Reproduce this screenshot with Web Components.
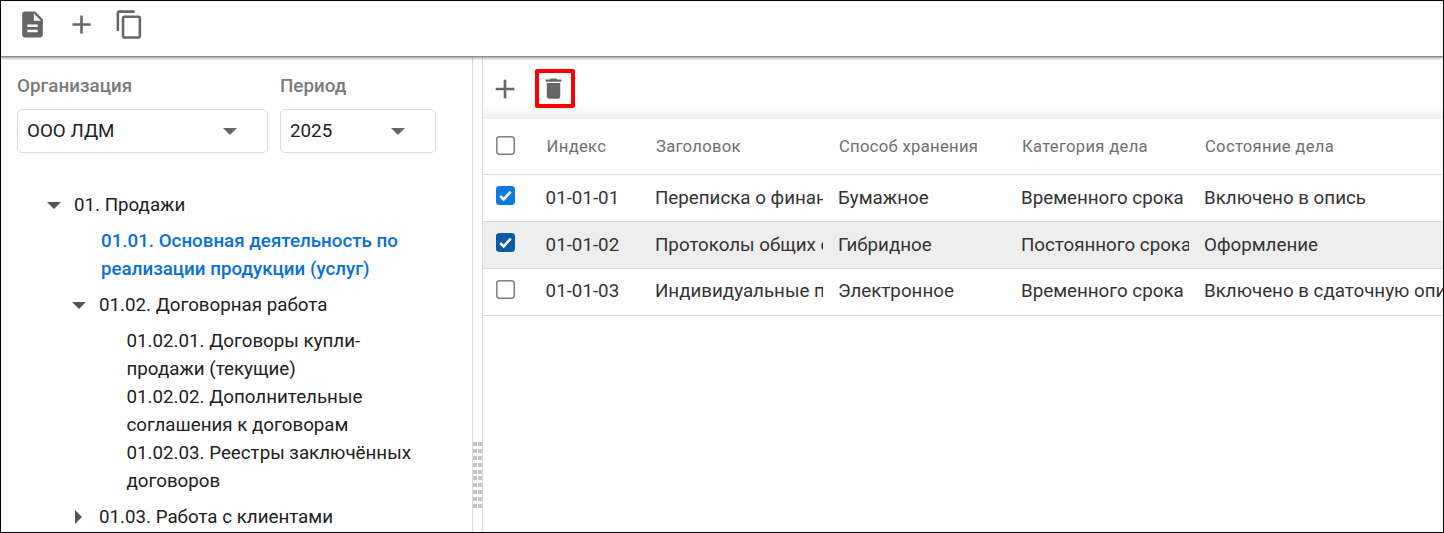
<!DOCTYPE html>
<html lang="ru"><head><meta charset="utf-8"><title>Дела</title>
<style>
html,body{margin:0;padding:0;background:#fff}
body{font-family:Roboto,"Liberation Sans",sans-serif;color:#212121}
</style></head><body>
<app-shell></app-shell>
<script>
const ICONS={
 doc:'<path d="M14 2H6c-1.1 0-2 .9-2 2v16c0 1.1.9 2 2 2h12c1.1 0 2-.9 2-2V8l-6-6zm2 16H8v-2h8v2zm0-4H8v-2h8v2zm-3-5V3.5L18.5 9H13z"/>',
 plus:'<path d="M19 13h-6v6h-2v-6H5v-2h6V5h2v6h6v2z"/>',
 copy:'<path d="M16 1H4c-1.1 0-2 .9-2 2v14h2V3h12V1zm3 4H8c-1.1 0-2 .9-2 2v14c0 1.1.9 2 2 2h11c1.1 0 2-.9 2-2V7c0-1.1-.9-2-2-2zm0 16H8V7h11v14z"/>',
 trash:'<path d="M6 19c0 1.1.9 2 2 2h8c1.1 0 2-.9 2-2V7H6v12zM19 4h-3.5l-1-1h-5l-1 1H5v2h14V4z"/>'
};
class UiIcon extends HTMLElement{
 connectedCallback(){
  const s=this.getAttribute('size')||31;
  this.attachShadow({mode:'open'}).innerHTML=`<style>:host{display:block;flex:none;width:${s}px;height:${s}px;color:#666}svg{display:block;width:100%;height:100%;fill:currentColor}</style><svg viewBox="0 0 24 24">${ICONS[this.getAttribute('name')]}</svg>`;
 }
}
customElements.define('ui-icon',UiIcon);

class TopBar extends HTMLElement{
 connectedCallback(){
  this.attachShadow({mode:'open'}).innerHTML=`<style>
  :host{display:flex;flex:none;height:56px;box-sizing:border-box;padding:8px 0 0 16px;gap:17.5px;align-items:flex-start;position:relative;z-index:2;background:#fff;border-bottom:1px solid #8c8c8c;box-shadow:0 1px 3px rgba(0,0,0,.45)}
  </style><slot></slot>`;
 }
}
customElements.define('top-bar',TopBar);

class SelectField extends HTMLElement{
 connectedCallback(){
  this.attachShadow({mode:'open'}).innerHTML=`<style>
  :host{display:flex;flex-direction:column;width:var(--w);font-size:18.8px}
  .l{font-weight:500;color:#7a7a7a;line-height:24px;height:24px;margin-bottom:11px}
  .b{height:44px;box-sizing:border-box;border:1px solid #dcdcdc;border-radius:5px;display:flex;align-items:center;justify-content:space-between;padding:0 30px 0 9px;color:#212121}
  i{display:block;width:0;height:0;border-left:7.5px solid transparent;border-right:7.5px solid transparent;border-top:7px solid #666}
  </style><div class="l">${this.getAttribute('label')}</div><div class="b"><span>${this.getAttribute('value')}</span><i></i></div>`;
 }
}
customElements.define('select-field',SelectField);

class TreeNode extends HTMLElement{
 connectedCallback(){
  const lvl=+this.getAttribute('level')||0, a=this.getAttribute('arrow');
  const pad=a?73+25*lvl:(lvl===1?100:125.5);
  this.attachShadow({mode:'open'}).innerHTML=`<style>
  :host{display:block;font-size:18.75px;line-height:28px;position:relative;padding-left:${pad}px;width:422px;box-sizing:border-box;margin-top:var(--mt,0)}
  :host([active]){color:#0a6fd8;font-weight:500}
  i{position:absolute;display:block;width:0;height:0}
  i.down{left:${46+25*lvl}px;top:11px;border-left:7.5px solid transparent;border-right:7.5px solid transparent;border-top:7px solid #555}
  i.right{left:74px;top:7px;border-top:7px solid transparent;border-bottom:7px solid transparent;border-left:7px solid #555}
  </style>${a?`<i class="${a}"></i>`:''}<slot></slot>`;
 }
}
customElements.define('tree-node',TreeNode);

class SidePane extends HTMLElement{
 connectedCallback(){
  this.attachShadow({mode:'open'}).innerHTML=`<style>
  :host{display:block;flex:none;width:472px;box-sizing:border-box;overflow:hidden;border-right:1px solid #d9d9d9}
  .f{display:flex;gap:12px;padding:17px 0 0 16px}
  .t{padding-top:38px}
  </style><div class="f"><slot name="fields"></slot></div><div class="t"><slot></slot></div>`;
 }
}
customElements.define('side-pane',SidePane);

class SplitGrip extends HTMLElement{
 connectedCallback(){
  const dots=Array.from({length:20},()=>'<b></b>').join('');
  this.attachShadow({mode:'open'}).innerHTML=`<style>
  :host{display:flex;flex:none;width:10px;box-sizing:border-box;border-right:1px solid #d9d9d9;align-items:flex-end;justify-content:center;padding-bottom:24px}
  div{display:grid;grid-template-columns:4px 4px;column-gap:1px;row-gap:2.9px;grid-auto-rows:4px}
  b{background:#c4c4c4}
  </style><div>${dots}</div>`;
 }
}
customElements.define('split-grip',SplitGrip);

class DataRow extends HTMLElement{
 connectedCallback(){
  const ch=this.hasAttribute('checked'),hd=this.hasAttribute('head'),sel=this.hasAttribute('selected');
  const cells=JSON.parse(this.getAttribute('cells'));
  const w=[109.4,183,183,183,260];
  const box=ch?`<svg width="19" height="19" viewBox="0 0 19 19"><rect width="19" height="19" rx="3.4" fill="${sel?'#0a5aa8':'#0b7bdf'}"/><path d="M4.2 10l3.5 3.4 7-7.8" fill="none" stroke="#fff" stroke-width="2.6"/></svg>`:`<svg width="19" height="19" viewBox="0 0 19 19"><rect x=".75" y=".75" width="17.5" height="17.5" rx="3" fill="#fff" stroke="#7f7f7f" stroke-width="1.5"/></svg>`;
  const tp=this.getAttribute('tp')||0;
  this.attachShadow({mode:'open'}).innerHTML=`<style>
  :host{display:flex;align-items:center;height:${hd?56:47}px;box-sizing:border-box;border-bottom:1px solid #dcdcdc;background:${sel?'#eeeeee':'#fff'};white-space:nowrap;font-size:${hd?'16.64px':'18.75px'};color:${hd?'#6f6f6f':'#333'}}
  .c{flex:none;width:62.6px;padding-left:13px;padding-bottom:${hd?2:5}px;box-sizing:border-box;display:flex}
  .d{flex:none;box-sizing:border-box;padding-right:15px;padding-bottom:${tp}px}
  .d span{display:block;overflow:hidden;${hd?'letter-spacing:.3px;text-indent:1px':''}}
  .d:first-of-type span{${hd?'text-indent:1.4px':''}}
  </style><div class="c">${box}</div>${cells.map((t,i)=>`<div class="d" style="width:${w[i]}px"><span>${t}</span></div>`).join('')}`;
 }
}
customElements.define('data-row',DataRow);

class MainPane extends HTMLElement{
 connectedCallback(){
  this.attachShadow({mode:'open'}).innerHTML=`<style>
  :host{display:block;flex:1;min-width:0;overflow:hidden}
  .tb{height:62px;box-sizing:border-box;display:flex;align-items:center;padding:1px 0 0 5.6px;gap:14px;background:linear-gradient(#fff 75%,#f1f1f1)}
  .btn{width:32px;height:32px;display:flex}
  .del{width:40px;height:39px;box-sizing:border-box;border:4px solid #f00;border-radius:2px;display:flex;align-items:center;justify-content:center;padding-right:2px}
  </style><div class="tb"><div class="btn"><ui-icon name="plus" size="32"></ui-icon></div><div class="del"><ui-icon name="trash" size="27"></ui-icon></div></div><slot></slot>`;
 }
}
customElements.define('main-pane',MainPane);

class AppShell extends HTMLElement{
 connectedCallback(){
  this.attachShadow({mode:'open'}).innerHTML=`<style>
  :host{display:flex;flex-direction:column;width:1444px;height:533px;box-sizing:border-box;border:1px solid #000;overflow:hidden;background:#fff}
  .body{display:flex;flex:1;min-height:0}
  </style>
  <top-bar><ui-icon name="doc"></ui-icon><ui-icon name="plus"></ui-icon><ui-icon name="copy"></ui-icon></top-bar>
  <div class="body">
   <side-pane>
    <select-field slot="fields" label="Организация" value="ООО ЛДМ" style="--w:251px"></select-field>
    <select-field slot="fields" label="Период" value="2025" style="--w:156px"></select-field>
    <tree-node arrow="down">01. Продажи</tree-node>
    <tree-node level="1" active style="--mt:8px">01.01. Основная деятельность по реализации продукции (услуг)</tree-node>
    <tree-node level="1" arrow="down" style="--mt:8px">01.02. Договорная работа</tree-node>
    <tree-node level="2" style="--mt:8px">01.02.01. Договоры купли-продажи (текущие)</tree-node>
    <tree-node level="2">01.02.02. Дополнительные соглашения к договорам</tree-node>
    <tree-node level="2">01.02.03. Реестры заключённых договоров</tree-node>
    <tree-node level="1" arrow="right" style="--mt:8px">01.03. Работа с клиентами</tree-node>
   </side-pane>
   <split-grip></split-grip>
   <main-pane>
    <data-row head cells='["Индекс","Заголовок","Способ хранения","Категория дела","Состояние дела"]'></data-row>
    <data-row checked cells='["01-01-01","Переписка о финансовых вопросах","Бумажное","Временного срока","Включено в опись"]'></data-row>
    <data-row checked selected cells='["01-01-02","Протоколы общих собраний","Гибридное","Постоянного срока","Оформление"]'></data-row>
    <data-row tp="2" cells='["01-01-03","Индивидуальные предприниматели","Электронное","Временного срока","Включено в сдаточную опись"]'></data-row>
   </main-pane>
  </div>`;
 }
}
customElements.define('app-shell',AppShell);
</script>
</body></html>
